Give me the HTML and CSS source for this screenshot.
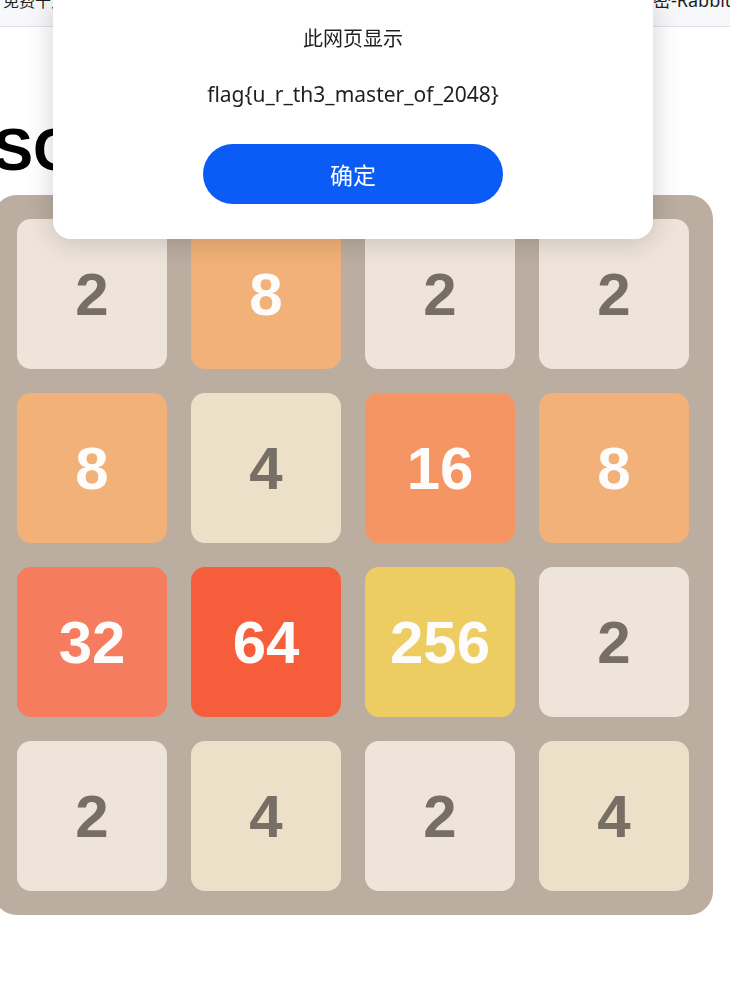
FILE: index.html
```html
<!DOCTYPE html>
<html lang="zh">
<head>
<meta charset="utf-8">
<title>2048</title>
<link rel="stylesheet" href="styles.css">
</head>
<body>
<div class="bookmarks">
  <span class="bm bm-left">免费十大在线工具</span>
  <span class="bm bm-right">密-Rabbit加密解密</span>
</div>
<main class="page">
  <h1 class="score">SCORE: 3220</h1>
  <div class="board">
    <div class="tile t2">2</div>
    <div class="tile t8">8</div>
    <div class="tile t2">2</div>
    <div class="tile t2">2</div>
    <div class="tile t8">8</div>
    <div class="tile t4">4</div>
    <div class="tile t16">16</div>
    <div class="tile t8">8</div>
    <div class="tile t32">32</div>
    <div class="tile t64">64</div>
    <div class="tile t256">256</div>
    <div class="tile t2">2</div>
    <div class="tile t2">2</div>
    <div class="tile t4">4</div>
    <div class="tile t2">2</div>
    <div class="tile t4">4</div>
  </div>
</main>
<div class="dialog" role="alertdialog">
  <div class="dialog-title">此网页显示</div>
  <div class="dialog-msg">flag{u_r_th3_master_of_2048}</div>
  <button class="dialog-btn">确定</button>
</div>
</body>
</html>
```
FILE: styles.css
```css
html, body {
  margin: 0;
  padding: 0;
  background: #ffffff;
  overflow: hidden;
}
body {
  font-family: "Liberation Sans", Arial, sans-serif;
  width: 730px;
  height: 1004px;
}
.bookmarks {
  height: 26px;
  background: #f7f8fa;
  border-bottom: 1px solid #dfe1e5;
  display: flex;
  overflow: hidden;
  white-space: nowrap;
  font-family: "Noto Sans", "Noto Sans CJK SC", sans-serif;
  font-size: 16px;
  line-height: 18px;
  color: #1f1f1f;
}
.bm {
  margin-top: -8px;
  flex: 0 0 auto;
}
.bm-left {
  width: 650px;
  padding-left: 3px;
}
.bm-right {
  flex: 0 0 auto;
  font-size: 18px;
  margin-top: -9px;
}
.page {
  margin-left: -7px;
}
.score {
  margin: 93px 0 15px 0;
  height: 60px;
  font-size: 60px;
  line-height: 60px;
  font-weight: bold;
  color: #000;
  white-space: nowrap;
}
.board {
  width: 720px;
  height: 720px;
  box-sizing: border-box;
  padding: 24px;
  background: #bbada0;
  border-radius: 24px;
  display: grid;
  grid-template-columns: repeat(4, 150px);
  grid-template-rows: repeat(4, 150px);
  gap: 24px;
}
.tile {
  border-radius: 14px;
  display: flex;
  align-items: center;
  justify-content: center;
  font-size: 60px;
  font-weight: bold;
  color: #fdfcfa;
}
.t2 { background: #eee4da; color: #776e65; }
.t4 { background: #ede0c8; color: #776e65; }
.t8 { background: #f2b179; }
.t16 { background: #f59563; }
.t32 { background: #f67c5f; }
.t64 { background: #f65e3b; }
.t256 { background: #edcc61; }

.dialog {
  position: fixed;
  left: 53px;
  top: 0;
  width: 600px;
  height: 239px;
  box-sizing: border-box;
  padding-top: 26px;
  background: #fff;
  border-radius: 0 0 18px 18px;
  box-shadow: 0 2px 28px rgba(0, 0, 0, 0.18);
  display: flex;
  flex-direction: column;
  align-items: center;
  font-family: "Noto Sans", "Noto Sans CJK SC", sans-serif;
  color: #1f1f1f;
}
.dialog-title {
  font-size: 20px;
  line-height: 26px;
  height: 26px;
}
.dialog-msg {
  margin-top: 29px;
  font-size: 21px;
  line-height: 26px;
  height: 26px;
}
.dialog-btn {
  margin-top: 37px;
  width: 300px;
  height: 60px;
  border: none;
  border-radius: 30px;
  background: #0b5bf6;
  color: #fff;
  font-family: "Noto Sans CJK SC", sans-serif;
  font-size: 23px;
  padding: 0;
}
```
